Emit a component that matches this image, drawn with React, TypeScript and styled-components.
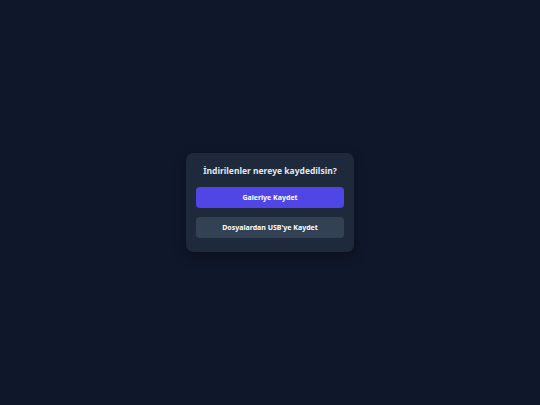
import React from "react";
import styled, { createGlobalStyle } from "styled-components";

const GlobalStyle = createGlobalStyle`
  html, body, #root {
    margin: 0;
    height: 100%;
  }
  body {
    background-color: #0f172a;
    font-family: "Noto Sans", "Open Sans", sans-serif;
  }
`;

const Page = styled.div`
  height: 100%;
  display: flex;
  align-items: center;
  justify-content: center;
`;

const Dialog = styled.div`
  width: 168px;
  box-sizing: border-box;
  padding: 9px 10px 14px;
  background-color: #1e293b;
  border-radius: 7px;
  box-shadow: 0 4px 12px rgba(0, 0, 0, 0.35);
  display: flex;
  flex-direction: column;
  align-items: stretch;
`;

const Title = styled.h2`
  margin: 0 0 9px;
  padding-top: 2px;
  color: #e2e8f0;
  font-size: 8.5px;
  line-height: 14px;
  font-weight: 700;
  text-align: center;
`;

const Actions = styled.div`
  display: flex;
  flex-direction: column;
  gap: 9px;
`;

const Button = styled.button<{ $primary?: boolean }>`
  height: 21px;
  border: none;
  border-radius: 4px;
  padding: 0;
  font-family: inherit;
  font-size: 7px;
  font-weight: 700;
  color: #ffffff;
  background-color: ${(p) => (p.$primary ? "#4f46e5" : "#334155")};
  cursor: pointer;
`;

export default function App() {
  return (
    <>
      <GlobalStyle />
      <Page>
        <Dialog>
          <Title>İndirilenler nereye kaydedilsin?</Title>
          <Actions>
            <Button $primary>Galeriye Kaydet</Button>
            <Button>Dosyalardan USB'ye Kaydet</Button>
          </Actions>
        </Dialog>
      </Page>
    </>
  );
}
